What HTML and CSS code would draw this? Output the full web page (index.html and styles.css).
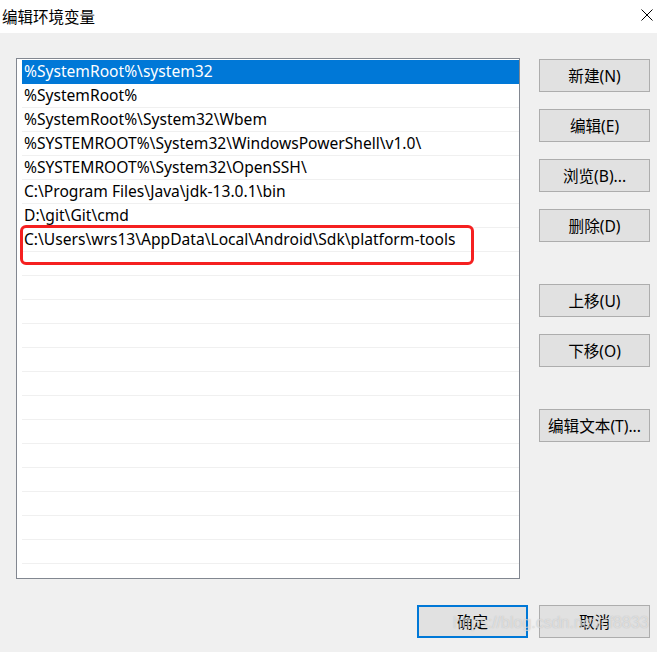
FILE: index.html
```
<!DOCTYPE html>
<html lang="zh-CN">
<head>
<meta charset="utf-8">
<title>编辑环境变量</title>
<link rel="stylesheet" href="styles.css">
</head>
<body>
<div class="window">
  <div class="titlebar">
    <span class="title">编辑环境变量</span>
    <svg class="close" width="12" height="12" viewBox="0 0 12 12"><path d="M0.5 0.5 L11.5 11.5 M11.5 0.5 L0.5 11.5" stroke="#000" stroke-width="1" fill="none"/></svg>
  </div>
  <div class="content">
    <div class="main">
      <div class="list">
        <div class="row selected">%SystemRoot%\system32</div>
        <div class="row">%SystemRoot%</div>
        <div class="row">%SystemRoot%\System32\Wbem</div>
        <div class="row">%SYSTEMROOT%\System32\WindowsPowerShell\v1.0\</div>
        <div class="row">%SYSTEMROOT%\System32\OpenSSH\</div>
        <div class="row">C:\Program Files\Java\jdk-13.0.1\bin</div>
        <div class="row">D:\git\Git\cmd</div>
        <div class="row">C:\Users\wrs13\AppData\Local\Android\Sdk\platform-tools</div>
        <div class="row"></div>
        <div class="row"></div>
        <div class="row"></div>
        <div class="row"></div>
        <div class="row"></div>
        <div class="row"></div>
        <div class="row"></div>
        <div class="row"></div>
        <div class="row"></div>
        <div class="row"></div>
        <div class="row"></div>
        <div class="row"></div>
        <div class="row"></div>
        <div class="highlight"></div>
      </div>
      <div class="side">
        <div class="group">
          <button class="btn">新建(N)</button>
          <button class="btn">编辑(E)</button>
          <button class="btn">浏览(B)...</button>
          <button class="btn">删除(D)</button>
        </div>
        <div class="group">
          <button class="btn">上移(U)</button>
          <button class="btn">下移(O)</button>
        </div>
        <div class="group">
          <button class="btn">编辑文本(T)...</button>
        </div>
      </div>
    </div>
    <div class="footer">
      <button class="btn default">确定</button>
      <button class="btn">取消</button>
    </div>
  </div>
  <div class="watermark">https://blog.csdn.net/cf8833</div>
</div>
</body>
</html>
```
FILE: styles.css
```
html, body {
  margin: 0;
  padding: 0;
  background: #f0f0f0;
}
.window {
  position: relative;
  width: 657px;
  height: 652px;
  overflow: hidden;
  font-family: "Noto Sans", "Noto Sans CJK SC", sans-serif;
  font-size: 15.6px;
  color: #000;
}
.titlebar {
  height: 33px;
  background: #fff;
  display: flex;
  align-items: center;
  justify-content: space-between;
  padding: 0 4px 0 2px;
  box-sizing: border-box;
}
.title {
  font-family: "Noto Sans CJK SC", sans-serif;
  font-size: 15.5px;
  margin-top: -2px;
}
.close {
  display: block;
  margin-top: -4px;
}
.content {
  padding: 25px 7px 0 16px;
}
.main {
  display: flex;
  align-items: flex-start;
}
.list {
  position: relative;
  height: 518px;
  width: 497px;
  border: 1px solid #828790;
  background: #fff;
  padding: 1px 0 0 5px;
  box-sizing: content-box;
}
.row {
  height: 23px;
  line-height: 23px;
  border-bottom: 1px solid #f0f0f0;
  padding-left: 2px;
  white-space: nowrap;
}
.row.selected {
  background: #0078d7;
  color: #fff;
  border-bottom-color: #0078d7;
}
.highlight {
  position: absolute;
  left: 3px;
  top: 166px;
  width: 448px;
  height: 34px;
  border: 3px solid #f52020;
  border-radius: 6px;
}
.side {
  margin-left: 19px;
  padding-top: 1px;
  display: flex;
  flex-direction: column;
  gap: 42px;
}
.group {
  display: flex;
  flex-direction: column;
  gap: 17px;
}
.btn {
  width: 111px;
  height: 33px;
  background: #e1e1e1;
  border: 1px solid #adadad;
  font-family: "Noto Sans", "Noto Sans CJK SC", sans-serif;
  font-size: 15.6px;
  color: #000;
  padding: 0;
  margin: 0;
}
.footer {
  display: flex;
  justify-content: flex-end;
  gap: 11px;
  margin-top: 26px;
}
.btn.default {
  border: 2px solid #0078d7;
}
.watermark {
  position: absolute;
  left: 453px;
  top: 614px;
  font-family: "Liberation Sans", sans-serif;
  font-size: 16px;
  color: rgba(255,255,255,0.5);
  text-shadow: 0 0 1px rgba(140,140,140,0.55);
  white-space: nowrap;
  pointer-events: none;
}
```
